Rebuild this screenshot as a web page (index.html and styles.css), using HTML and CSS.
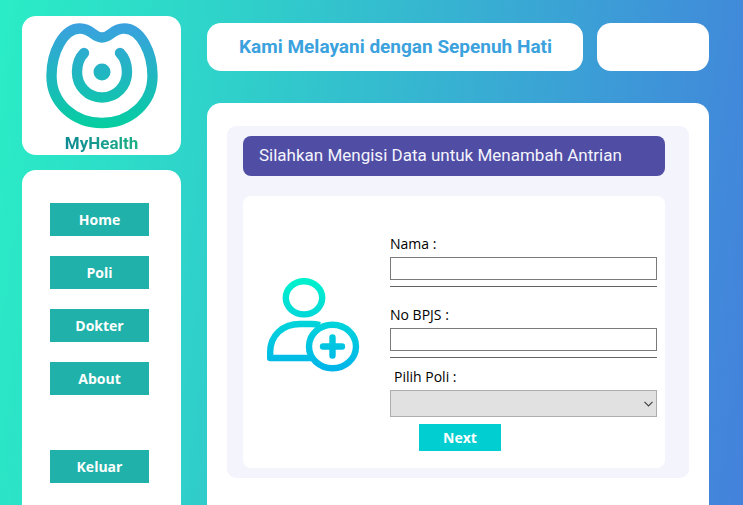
FILE: index.html
```html
<!DOCTYPE html>
<html lang="id">
<head>
<meta charset="utf-8">
<meta name="viewport" content="width=device-width, initial-scale=1">
<title>MyHealth</title>
<link rel="stylesheet" href="styles.css">
</head>
<body>
<div class="app">
  <aside class="sidebar">
    <div class="brand">
      <svg class="brand-logo" viewBox="0 0 112 106" aria-hidden="true">
        <defs>
          <linearGradient id="logo" gradientUnits="userSpaceOnUse" x1="0" y1="0" x2="0" y2="106">
            <stop offset="0" stop-color="#3ba0e0"/>
            <stop offset="1" stop-color="#04cf9f"/>
          </linearGradient>
        </defs>
        <g fill="none" stroke="url(#logo)" stroke-width="10.4" stroke-linecap="round">
          <path d="M56 14.500C65 14.500 66 5.500 78 5.500C95 5.500 106.500 30 106.500 53C106.500 80 84 100 56 100C28 100 5.500 80 5.500 53C5.500 30 17 5.500 34 5.500C46 5.500 47 14.500 56 14.500Z"/>
          <path d="M38 30C33 35 31 42 31 49C31 63.500 42 74.500 56 74.500C70 74.500 81 63.500 81 49C81 42 79 35 74 30"/>
        </g>
        <circle cx="56" cy="49" r="8.500" fill="url(#logo)"/>
      </svg>
      <div class="brand-name">MyHealth</div>
    </div>
    <nav class="menu">
      <button type="button" class="menu-button">Home</button>
      <button type="button" class="menu-button">Poli</button>
      <button type="button" class="menu-button">Dokter</button>
      <button type="button" class="menu-button">About</button>
      <button type="button" class="menu-button menu-exit">Keluar</button>
    </nav>
  </aside>
  <main class="content">
    <header class="topbar">
      <h1 class="slogan">Kami Melayani dengan Sepenuh Hati</h1>
      <div class="topbar-box"></div>
    </header>
    <section class="page">
      <div class="panel">
        <h2 class="panel-title">Silahkan Mengisi Data untuk Menambah Antrian</h2>
        <div class="card">
          <svg class="card-icon" viewBox="0 0 94 94" aria-hidden="true">
            <defs>
              <linearGradient id="user" gradientUnits="userSpaceOnUse" x1="0" y1="0" x2="0" y2="94">
                <stop offset="0" stop-color="#00f2cc"/>
                <stop offset="1" stop-color="#00b3ea"/>
              </linearGradient>
            </defs>
            <g fill="none" stroke="url(#user)" stroke-width="6.400" stroke-linecap="round" stroke-linejoin="round">
              <ellipse cx="38" cy="19.800" rx="18.200" ry="16.600"/>
              <path d="M54 47C51 46.200 48 46 45 46H34C16 46 4.200 58 4.200 74V80H45" stroke-linecap="butt"/>
              <ellipse cx="66.500" cy="68.500" rx="23.500" ry="21.800"/>
              <path d="M57 68.500H76M66.500 59.500V77.500"/>
            </g>
          </svg>
          <form class="form">
            <div class="field">
              <label for="nama">Nama :</label>
              <input id="nama" type="text">
            </div>
            <div class="field">
              <label for="bpjs">No BPJS :</label>
              <input id="bpjs" type="text">
            </div>
            <div class="field field-select">
              <label for="poli">Pilih Poli :</label>
              <div class="select-box">
                <select id="poli"><option></option></select>
                <svg class="chevron" viewBox="0 0 9 6" aria-hidden="true"><path d="M.5 .8L4.500 4.800L8.500 .8" fill="none" stroke="#444" stroke-width="1.200"/></svg>
              </div>
            </div>
            <button type="button" class="next">Next</button>
          </form>
        </div>
      </div>
    </section>
  </main>
</div>
</body>
</html>
```
FILE: styles.css
```css
* {
  box-sizing: border-box;
}

body {
  margin: 0;
  font-family: "Open Sans", "Noto Sans", sans-serif;
  font-size: 14px;
  color: #000;
}

.app {
  display: grid;
  grid-template-columns: 159px 1fr;
  column-gap: 26px;
  min-height: 100vh;
  padding: 16px 34px 0 22px;
  background: linear-gradient(98deg, #2aedc6 0%, #2fd0ca 30%, #39a9d4 64%, #4189da 92%, #4482dc 100%);
}

.sidebar,
.content {
  display: flex;
  flex-direction: column;
}

.brand {
  display: flex;
  flex-direction: column;
  align-items: center;
  padding-top: 7px;
  background: #fff;
  border-radius: 14px;
}

.brand-logo {
  width: 112px;
  height: 106px;
}

.brand-name {
  margin-top: 2px;
  font: bold 17px/24px Roboto, sans-serif;
  background: linear-gradient(90deg, #0d8a94, #1fb085);
  background-clip: text;
  -webkit-background-clip: text;
  color: transparent;
}

.menu {
  flex: 1;
  display: flex;
  flex-direction: column;
  align-items: center;
  gap: 20px;
  margin-top: 15px;
  padding: 33px 32px 22px 28px;
  background: #fff;
  border-radius: 14px 14px 0 0;
}

.menu-button,
.next {
  border: 0;
  padding: 0;
  font: bold 14px/20px "Open Sans", "Noto Sans", sans-serif;
  color: #fff;
}

.menu-button {
  width: 99px;
  height: 33px;
  background: #20b2aa;
}

.menu-exit {
  margin-top: 35px;
}

.content {
  padding-top: 7px;
}

.topbar {
  display: flex;
  gap: 14px;
  height: 48px;
}

.slogan,
.topbar-box {
  background: #fff;
  border-radius: 14px;
}

.slogan {
  flex: 1;
  margin: 0;
  padding-left: 32px;
  font: bold 19px/48px Roboto, sans-serif;
  color: #3ba2de;
}

.topbar-box {
  width: 112px;
}

.page {
  flex: 1;
  margin-top: 32px;
  padding: 23px 20px 24px;
  background: #fff;
  border-radius: 14px 14px 0 0;
}

.panel {
  padding: 10px 24px 10px 16px;
  background: #f4f5fc;
  border-radius: 9px;
}

.panel-title {
  margin: 0;
  padding: 0 0 2px 16px;
  font: 400 17px/38px Roboto, sans-serif;
  color: #f4f5fc;
  background: #504da5;
  border-radius: 8px;
}

.card {
  display: flex;
  gap: 30px;
  margin-top: 20px;
  padding: 38px 8px 17px 23px;
  background: #fff;
  border-radius: 8px;
}

.card-icon {
  flex: none;
  width: 94px;
  height: 94px;
  margin-top: 44px;
}

.form {
  flex: 1;
}

.field {
  display: flex;
  flex-direction: column;
  padding-bottom: 6px;
  border-bottom: 1px solid #646464;
}

.field + .field {
  margin-top: 18px;
}

.field label {
  line-height: 20px;
  margin-bottom: 3px;
}

.field input {
  height: 23px;
  width: 100%;
  padding: 0 4px;
  border: 1px solid #7a7a7a;
  background: #fff;
}

.field + .field-select {
  margin-top: 9px;
  padding-bottom: 0;
  border-bottom: 0;
}

.field-select label {
  padding-left: 4px;
}

.select-box {
  position: relative;
}

.select-box select {
  display: block;
  appearance: none;
  width: 100%;
  height: 27px;
  border: 1px solid #adadad;
  border-radius: 0;
  background: #e1e1e1;
}

.chevron {
  position: absolute;
  right: 4px;
  top: 11px;
  width: 9px;
  height: 6px;
  pointer-events: none;
}

.next {
  display: block;
  width: 82px;
  height: 27px;
  margin: 7px 0 0 29px;
  background: #00ced1;
}
```
